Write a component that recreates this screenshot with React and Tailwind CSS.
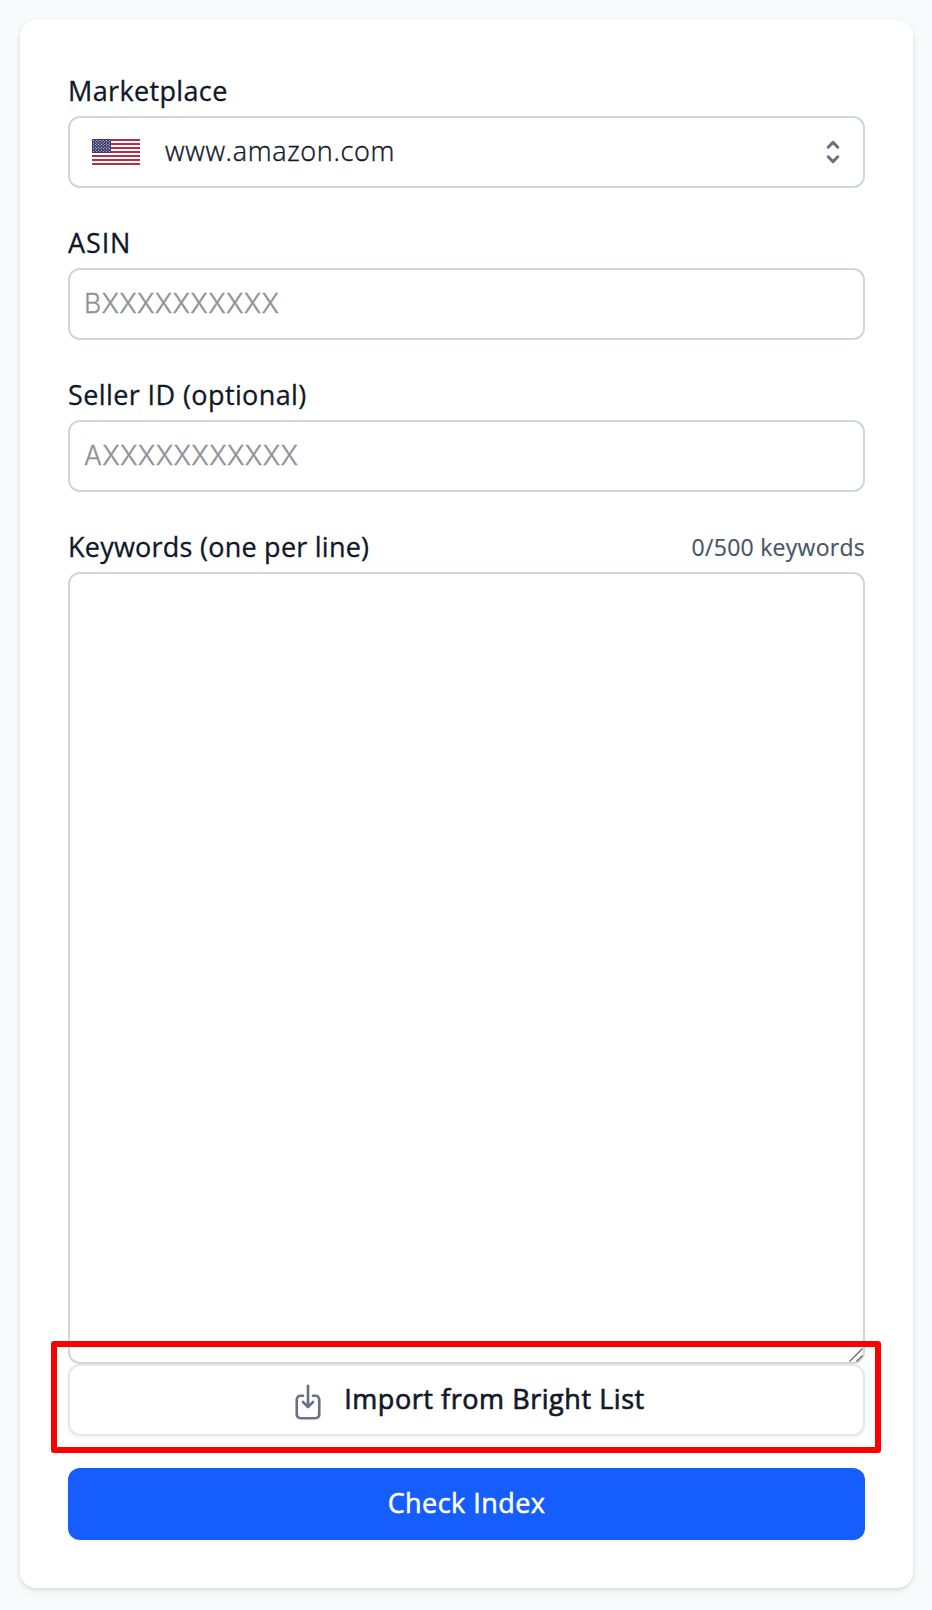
import { useState } from 'react';

const STRIPES = [0, 2, 4, 6, 8, 10, 12];

function UsFlag() {
  const stars = [];
  for (let row = 0; row < 9; row++) {
    const count = row % 2 === 0 ? 6 : 5;
    for (let i = 0; i < count; i++) {
      stars.push([1.65 + (row % 2) * 1.6 + i * 3.2, 1.4 + row * 1.36]);
    }
  }

  return (
    <svg className="h-[26px] w-12 shrink-0" viewBox="0 0 48 26" aria-hidden="true">
      <rect width="48" height="26" fill="#fff" />
      {STRIPES.map((n) => (
        <rect key={n} y={n * 2} width="48" height="2" fill="#b22234" fillOpacity="0.94" />
      ))}
      <rect width="19" height="14" fill="#3c3b6e" />
      {stars.map(([x, y]) => (
        <circle key={`${x}-${y}`} cx={x} cy={y} r="0.5" fill="#fff" />
      ))}
    </svg>
  );
}

function SelectorIcon() {
  return (
    <svg className="size-8 shrink-0 text-[#6a7282]" viewBox="0 0 20 20" fill="none" stroke="currentColor" strokeWidth="1.9" strokeLinecap="round" strokeLinejoin="round">
      <path d="M7 7l3-3 3 3m0 6l-3 3-3-3" />
    </svg>
  );
}

function ImportIcon() {
  return (
    <svg className="mt-1 size-10 shrink-0 text-[#6a7282]" viewBox="0 0 24 24" fill="none" stroke="currentColor" strokeWidth="1.6" strokeLinecap="round" strokeLinejoin="round">
      <path d="M9 8.25H7.5a2.25 2.25 0 0 0-2.25 2.25v9a2.25 2.25 0 0 0 2.25 2.25h9a2.25 2.25 0 0 0 2.25-2.25v-9a2.25 2.25 0 0 0-2.25-2.25H15M9 12l3 3m0 0l3-3m-3 3V2.25" />
    </svg>
  );
}

export default function App() {
  const [asin, setAsin] = useState('');
  const [sellerId, setSellerId] = useState('');
  const [keywords, setKeywords] = useState('');

  const keywordCount = keywords.split('\n').filter((k) => k.trim()).length;

  return (
    <div className="h-[1610px] w-[932px] bg-[#f9fafc] pl-5 pt-5 font-['Open_Sans','Noto_Sans',sans-serif] text-[27px] text-[#101828]">
      <form
        onSubmit={(e) => e.preventDefault()}
        className="flex h-[1568px] w-[893px] flex-col rounded-2xl bg-white p-12 shadow-[0_2px_6px_rgba(0,0,0,0.1),0_2px_4px_-2px_rgba(0,0,0,0.1)]"
      >
        <label className="mb-[5px] mt-[3px] h-10 leading-10 tracking-[0.36px] [-webkit-text-stroke:0.3px]">Marketplace</label>
        <button
          type="button"
          className="flex h-[72px] w-full shrink-0 items-center rounded-xl border-2 border-[#d1d5dc] bg-white pl-[22px] pr-3.5 text-left font-light"
        >
          <UsFlag />
          <span className="ml-[25px] flex-1 pb-0.5 tracking-[0.68px] [-webkit-text-stroke:0.4px]">www.amazon.com</span>
          <SelectorIcon />
        </button>

        <label htmlFor="asin" className="mb-[5px] mt-[35px] h-10 leading-10 tracking-[0.9px] [-webkit-text-stroke:0.3px]">ASIN</label>
        <input
          id="asin"
          value={asin}
          onChange={(e) => setAsin(e.target.value)}
          placeholder="BXXXXXXXXXX"
          className="h-[72px] w-full shrink-0 rounded-xl border-2 border-[#d1d5dc] px-3.5 pb-0.5 font-['Inter',sans-serif] text-[26.5px] font-light placeholder:tracking-[0.25px] placeholder:text-[#8f9199] placeholder:[-webkit-text-stroke:0.3px]"
        />

        <label htmlFor="seller" className="mb-[5px] mt-[35px] h-10 leading-10 tracking-[0.4px] [-webkit-text-stroke:0.3px]">Seller ID (optional)</label>
        <input
          id="seller"
          value={sellerId}
          onChange={(e) => setSellerId(e.target.value)}
          placeholder="AXXXXXXXXXXX"
          className="h-[72px] w-full shrink-0 rounded-xl border-2 border-[#d1d5dc] px-3.5 pb-0.5 font-['Inter',sans-serif] text-[26.5px] font-light placeholder:tracking-[0.3px] placeholder:text-[#8f9199] placeholder:[-webkit-text-stroke:0.3px]"
        />

        <div className="mb-[5px] mt-[35px] flex h-10 items-center justify-between leading-10">
          <label htmlFor="keywords" className="tracking-[0.24px] [-webkit-text-stroke:0.3px]">Keywords (one per line)</label>
          <span className="text-[23px] tracking-[0.27px] text-[#4a5565] [-webkit-text-stroke:0.2px]">{keywordCount}/500 keywords</span>
        </div>

        <div className="relative">
          <textarea
            id="keywords"
            value={keywords}
            onChange={(e) => setKeywords(e.target.value)}
            className="block h-[792px] w-full resize-none rounded-xl border-2 border-[#d1d5dc] px-3.5 py-3 font-light"
          />
          {/* resize grip */}
          <svg className="absolute bottom-0.5 right-0.5 size-[14px]" viewBox="0 0 14 14" fill="none" stroke="#666" strokeWidth="1.3">
            <path d="M0.5 13.5l13-13M7.5 13.5l6-6" />
          </svg>
          {/* highlight around the import button */}
          <div className="pointer-events-none absolute -left-[17px] top-[769px] h-[112px] w-[830px] rounded-[3px] border-[6px] border-[#ff0000]" />
        </div>

        <button
          type="button"
          className="flex h-[72px] w-full shrink-0 items-center justify-center gap-4 rounded-xl border-2 border-[#e5e7eb] bg-white shadow-[0_2px_4px_rgba(0,0,0,0.05)]"
        >
          <ImportIcon />
          <span className="pb-0.5 tracking-[0.55px] [-webkit-text-stroke:0.65px]">Import from Bright List</span>
        </button>

        <button
          type="submit"
          className="mt-8 h-[72px] w-full shrink-0 rounded-xl bg-[#155dfc] pb-0.5 tracking-[0.45px] text-white shadow-[0_2px_4px_rgba(0,0,0,0.05)] [-webkit-text-stroke:0.5px]"
        >
          Check Index
        </button>
      </form>
    </div>
  );
}
